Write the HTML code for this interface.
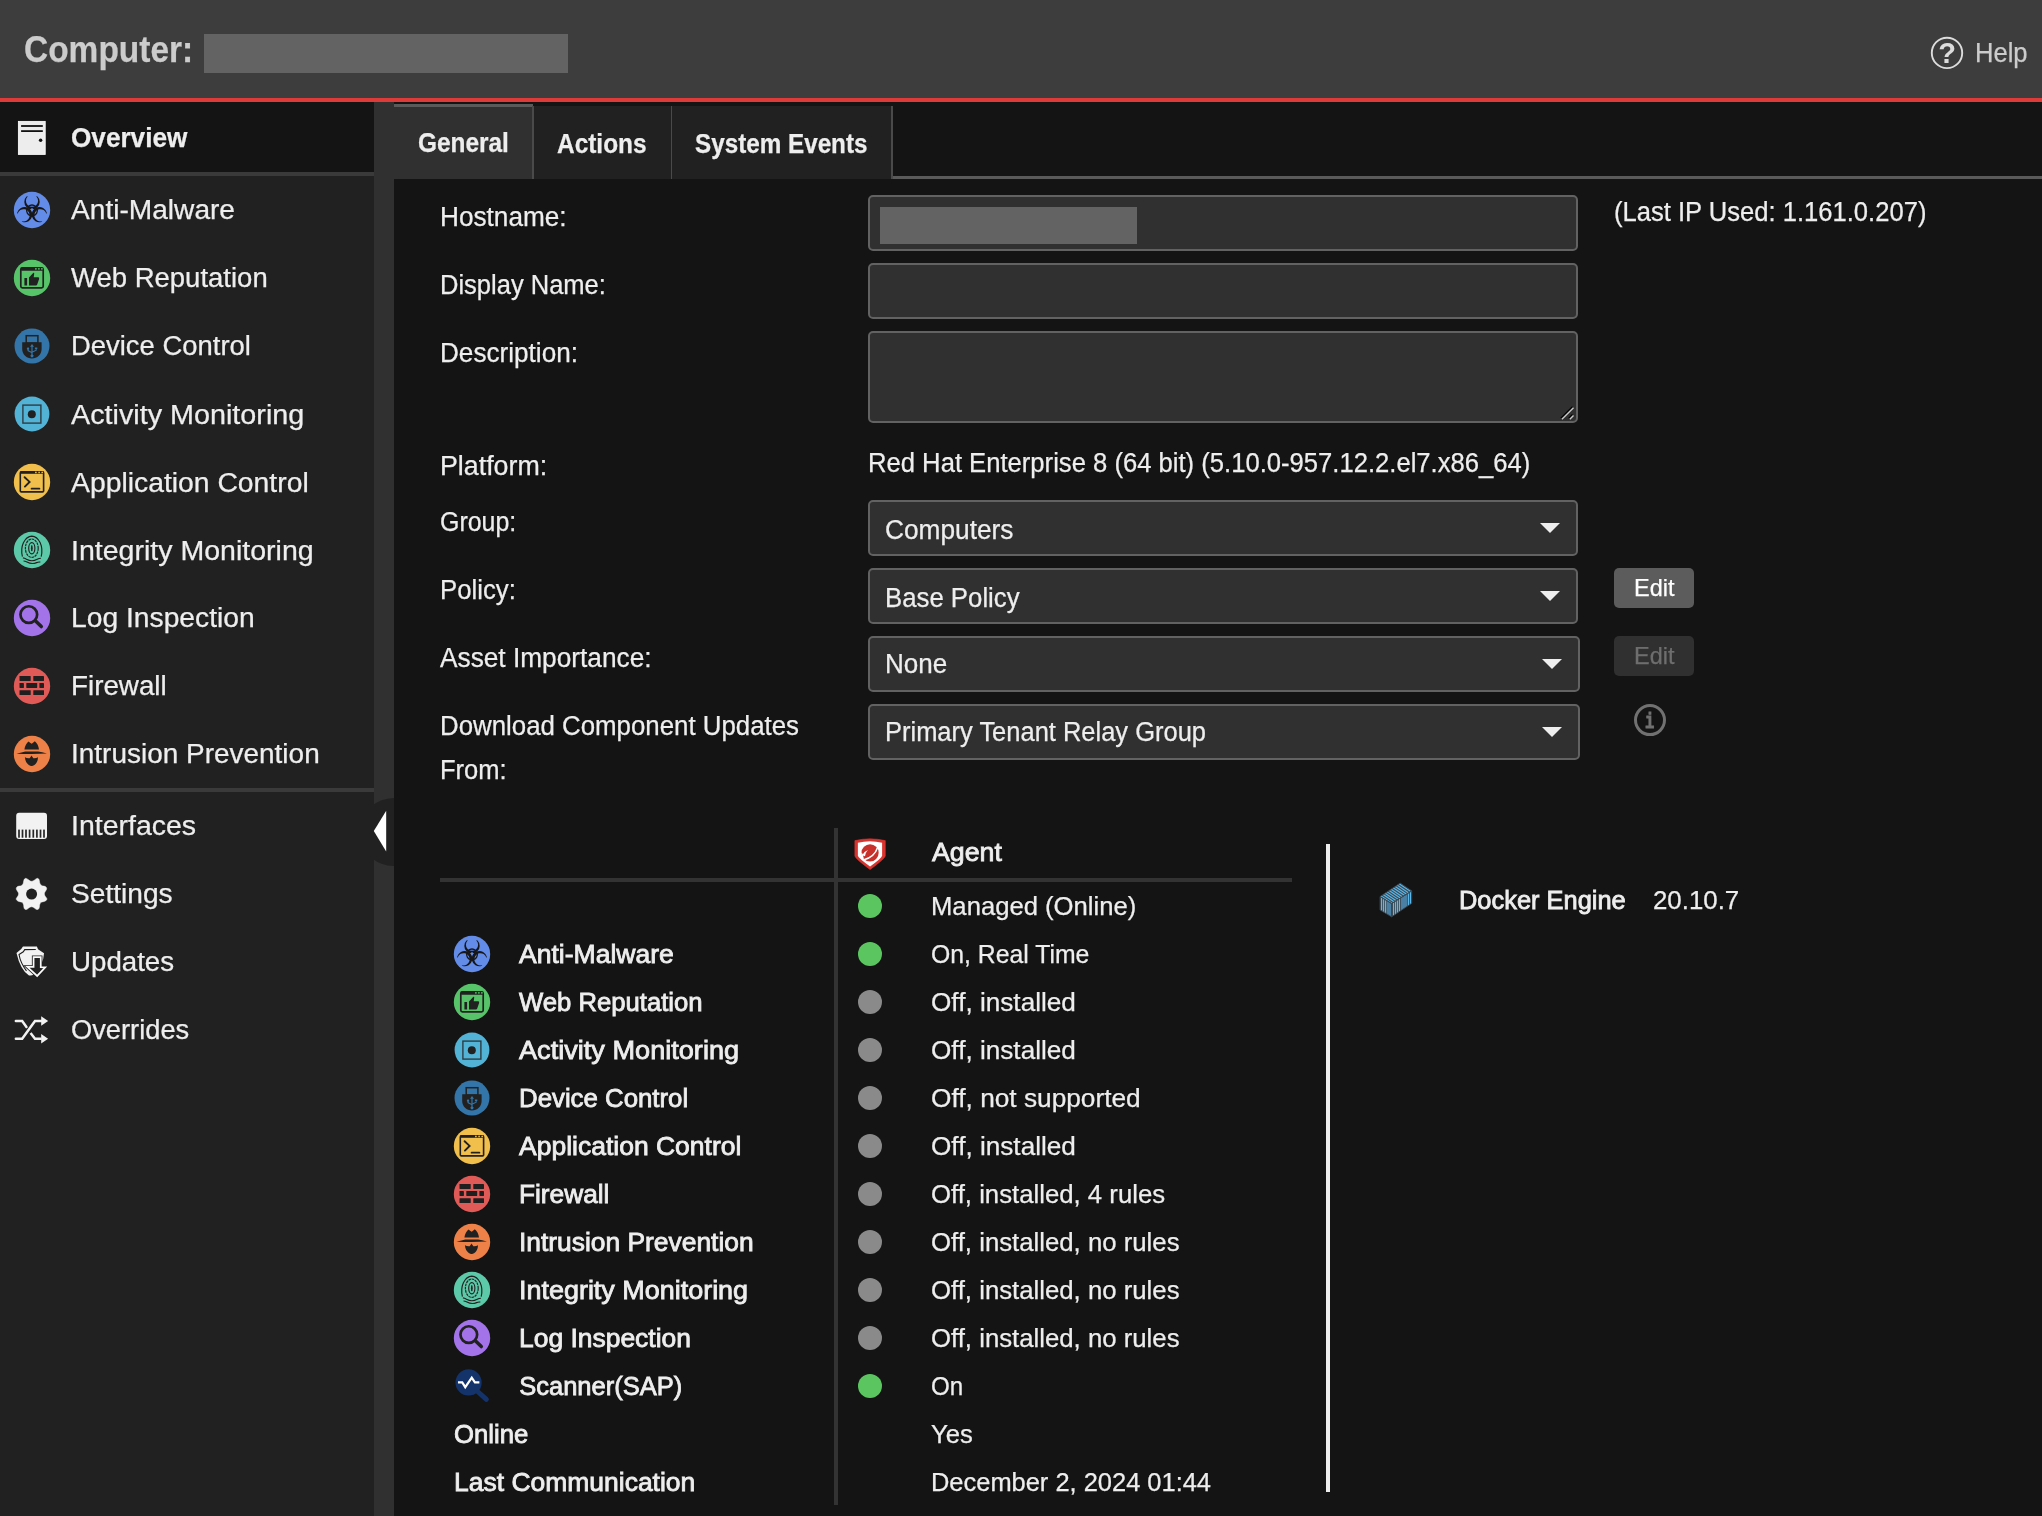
<!DOCTYPE html>
<html lang="en"><head><meta charset="utf-8"><title>Computer</title>
<style>
html,body{margin:0;padding:0;width:2042px;height:1516px;overflow:hidden;background:#141414;}
body{position:relative;font-family:"Liberation Sans",Arial,sans-serif;color:#eeeeee;}
.a{position:absolute;}
.t{position:absolute;white-space:pre;line-height:1;transform-origin:0 50%;-webkit-text-stroke:0.25px currentColor;}
#header{left:0;top:0;width:2042px;height:98px;background:#3d3d3d;}
#redline{left:0;top:98px;width:2042px;height:4px;background:#dd3a3a;}
#sidebar{left:0;top:102px;width:374px;height:1414px;background:#212121;}
#gap{left:374px;top:102px;width:20px;height:1414px;background:#303030;}
#ov{left:0;top:102px;width:374px;height:70px;background:#141414;}
.sep{left:0;width:374px;height:4px;background:#3a3a3a;}
.redact{background:#636363;}
.tab{top:106px;height:73px;background:#212121;}
.inp{box-sizing:border-box;background:#303030;border:2px solid #626262;border-radius:5px;}
.arr{width:0;height:0;border-left:10px solid transparent;border-right:10px solid transparent;border-top:10px solid #eeeeee;}
.btn{border-radius:5px;}
.dot{width:24px;height:24px;border-radius:50%;}
.g{background:#5bc65f;}
.o{background:#8a8a8a;}
.ic{width:36px;height:36px;}
#labels{position:absolute;left:0;top:0;width:2042px;height:1516px;will-change:transform;}
@media (max-width:1500px){html{zoom:.5}}

</style></head>
<body>
<div id="header" class="a"></div>
<div class="a redact" style="left:204px;top:34px;width:364px;height:39px"></div>
<div id="redline" class="a"></div>
<div id="sidebar" class="a"></div>
<div id="ov" class="a"></div>
<div class="a sep" style="top:172px"></div>
<div class="a sep" style="top:788px"></div>
<div id="gap" class="a"></div>
<!-- tabs -->
<div class="a" style="left:394px;top:176px;width:1648px;height:3px;background:#5a5a5a"></div>
<div class="a" style="left:394px;top:104px;width:139px;height:75px;background:#303030;border-top:3px solid #5a5a5a;box-sizing:border-box"></div>
<div class="a tab" style="left:533px;width:137px;border-left:2px solid #4a4a4a;border-right:2px solid #4a4a4a;box-sizing:content-box;left:532px"></div>
<div class="a tab" style="left:672px;width:219px;border-right:2px solid #4a4a4a"></div>
<div class="a" style="left:394px;top:179px;width:1648px;height:1337px;background:#141414"></div>
<!-- inputs -->
<div class="a inp" style="left:868px;top:195px;width:710px;height:56px"></div>
<div class="a redact" style="left:880px;top:207px;width:257px;height:37px"></div>
<div class="a inp" style="left:868px;top:263px;width:710px;height:56px"></div>
<div class="a inp" style="left:868px;top:331px;width:710px;height:92px"></div>
<div class="a inp" style="left:868px;top:500px;width:710px;height:56px"></div>
<div class="a inp" style="left:868px;top:568px;width:710px;height:56px"></div>
<div class="a inp" style="left:868px;top:636px;width:712px;height:56px"></div>
<div class="a inp" style="left:868px;top:704px;width:712px;height:56px"></div>
<div class="a arr" style="left:1540px;top:523px"></div>
<div class="a arr" style="left:1540px;top:591px"></div>
<div class="a arr" style="left:1542px;top:659px"></div>
<div class="a arr" style="left:1542px;top:727px"></div>
<div class="a btn" style="left:1614px;top:568px;width:80px;height:40px;background:#5c5c5c"></div>
<div class="a btn" style="left:1614px;top:636px;width:80px;height:40px;background:#303030"></div>
<!-- table lines -->
<div class="a" style="left:440px;top:878px;width:852px;height:4px;background:#333333"></div>
<div class="a" style="left:834px;top:828px;width:4px;height:677px;background:#333333"></div>
<div class="a" style="left:1326px;top:844px;width:4px;height:648px;background:#eeeeee"></div>
<svg class="a" style="left:0;top:0;will-change:transform" width="2042" height="1516" viewBox="0 0 2042 1516"><rect x="18.4" y="121.4" width="26.8" height="33" fill="#ededed" stroke="#fbfbfb" stroke-width="0.9"/><rect x="21.1" y="125.1" width="21.7" height="1.8" fill="#111"/><rect x="21.1" y="130.2" width="21.7" height="1.8" fill="#111"/><circle cx="40.6" cy="140.2" r="1.75" fill="#111"/><rect x="16.2" y="812.8" width="30.8" height="26.1" rx="3" fill="#f2f2f2"/><rect x="18.15" y="829.6" width="1.7" height="8.1" fill="#262626"/><rect x="21.65" y="829.6" width="1.7" height="8.1" fill="#262626"/><rect x="25.15" y="829.6" width="1.7" height="8.1" fill="#262626"/><rect x="28.75" y="829.6" width="1.7" height="8.1" fill="#262626"/><rect x="32.45" y="829.6" width="1.7" height="8.1" fill="#262626"/><rect x="36.05" y="829.6" width="1.7" height="8.1" fill="#262626"/><rect x="39.65" y="829.6" width="1.7" height="8.1" fill="#262626"/><rect x="43.15" y="829.6" width="1.7" height="8.1" fill="#262626"/><path d="M30.39,881.05 Q31.58,881.58 33.00,880.93 Q34.43,880.28 35.26,879.44 Q36.09,878.61 36.92,878.38 Q37.75,878.14 38.47,878.85 Q39.18,879.56 39.36,880.87 Q39.53,882.18 39.83,883.24 Q40.13,884.31 41.32,885.14 Q42.50,885.98 43.81,886.10 Q45.12,886.21 45.95,887.05 Q46.78,887.88 46.66,888.83 Q46.54,889.78 45.59,890.96 Q44.64,892.15 44.46,893.10 Q44.29,894.05 44.58,895.12 Q44.88,896.19 45.95,897.26 Q47.02,898.33 46.90,899.16 Q46.78,899.99 45.83,900.70 Q44.88,901.42 43.45,901.65 Q42.03,901.89 41.08,902.37 Q40.13,902.84 39.83,904.15 Q39.53,905.45 39.36,907.00 Q39.18,908.54 38.35,909.14 Q37.52,909.73 36.68,909.49 Q35.85,909.25 34.78,908.30 Q33.71,907.35 32.65,907.00 Q31.58,906.64 30.51,907.00 Q29.44,907.35 28.37,908.30 Q27.30,909.25 26.47,909.49 Q25.64,909.73 24.81,909.14 Q23.98,908.54 23.86,907.00 Q23.74,905.45 23.38,904.15 Q23.03,902.84 22.08,902.37 Q21.13,901.89 19.58,901.65 Q18.04,901.42 17.15,900.58 Q16.26,899.75 16.20,899.04 Q16.14,898.33 17.09,897.26 Q18.04,896.19 18.39,895.12 Q18.75,894.05 18.51,893.10 Q18.28,892.15 17.33,890.96 Q16.38,889.78 16.26,888.83 Q16.14,887.88 16.97,887.05 Q17.80,886.21 19.34,886.10 Q20.89,885.98 21.96,885.14 Q23.03,884.31 23.26,883.24 Q23.50,882.18 23.74,880.87 Q23.98,879.56 24.69,878.85 Q25.40,878.14 26.23,878.38 Q27.06,878.61 28.13,879.56 Q29.20,880.51 30.39,881.05 Z" fill="#f2f2f2" stroke="#f2f2f2" stroke-width="0.5"/><circle cx="31.6" cy="894.05" r="5.5" fill="#212121"/><path d="M22.97,946.60 L36.90,946.60 L38.01,949.13 L44.02,953.25 Q43.54,964.48 34.05,973.97 Q31.52,976.19 28.99,975.40 Q20.44,970.18 16.49,952.93 L21.23,948.97 Z" fill="#f2f2f2"/><path d="M35.79,949.54 L24.72,949.67 L23.29,951.82 L19.02,954.51 Q20.44,962.90 26.46,970.81" fill="none" stroke="#1a1a1a" stroke-width="1.1"/><path d="M33.58,957.14 L40.76,957.14 L40.76,967.17 L45.28,967.33 L37.15,975.94 L27.34,966.95 L33.58,966.95 Z" fill="#212121" stroke="#212121" stroke-width="3.4" stroke-linejoin="miter"/><path d="M33.58,957.14 L40.76,957.14 L40.76,967.17 L45.28,967.33 L37.15,975.94 L27.34,966.95 L33.58,966.95 Z" fill="#212121" stroke="#fafafa" stroke-width="1.7" stroke-linejoin="miter"/><path d="M15.85,1038.81 L22.18,1038.81 L35.00,1020.93 L41.65,1020.93" fill="none" stroke="#f2f2f2" stroke-width="2.5" stroke-linejoin="miter" stroke-linecap="round"/><path d="M15.85,1020.93 L22.18,1020.93 L26.46,1026.94" fill="none" stroke="#f2f2f2" stroke-width="2.5" stroke-linejoin="miter" stroke-linecap="round"/><path d="M30.57,1032.96 L35.00,1038.65 L41.65,1038.65" fill="none" stroke="#f2f2f2" stroke-width="2.5" stroke-linejoin="miter"/><path d="M41.17,1016.18 L48.13,1020.93 L41.17,1025.68 Z" fill="#f2f2f2"/><path d="M41.17,1033.91 L48.13,1038.65 L41.17,1043.56 Z" fill="#f2f2f2"/><clipPath id="gapclip"><rect x="374" y="102" width="20" height="1414"/></clipPath><circle cx="394" cy="832" r="34.1" fill="#212121" clip-path="url(#gapclip)"/><path d="M373.8,831.1 L386.2,810.7 L386.2,851.5 Z" fill="#ffffff"/><path d="M1560.9,418.3 L1572.5,406.7 M1568.8,418.3 L1572.5,414.6" stroke="#000" stroke-width="1.4"/><path d="M1561.9,419.3 L1573.5,407.7 M1569.8,419.3 L1573.5,415.6" stroke="#c8c8c8" stroke-width="1.4"/><circle cx="1947" cy="52.9" r="15.2" fill="none" stroke="#dcdcdc" stroke-width="1.9"/><text x="1947.2" y="63.4" text-anchor="middle" font-family="Liberation Sans, Arial, sans-serif" font-weight="700" font-size="29" fill="#dcdcdc">?</text><circle cx="1650" cy="720.1" r="14.5" fill="none" stroke="#717171" stroke-width="3"/><text transform="translate(1649.7,728.2) scale(0.74,1.06)" text-anchor="middle" font-family="Liberation Mono, monospace" font-weight="700" font-size="21" fill="#717171" stroke="#717171" stroke-width="0.9">i</text><path d="M854.87,840.61 Q870.07,837.12 885.27,840.61 L885.27,855.97 Q884.95,858.50 870.07,869.58 Q855.18,858.50 854.87,855.97 Z" fill="#d8342f" stroke="#d8342f" stroke-width="0.6" stroke-linejoin="round"/><path d="M857.87,842.82 Q870.07,839.66 882.10,842.82 L882.10,855.65 Q881.78,857.87 870.07,866.42 Q858.35,857.87 857.87,855.65 Z" fill="#ffffff"/><circle cx="870.07" cy="852.80" r="8.6" fill="#c8302b"/><path d="M864.05,859.77 Q874.50,856.92 877.35,848.05" fill="none" stroke="#ffffff" stroke-width="1.5"/><path d="M862.15,855.33 Q863.73,851.85 867.85,850.11 Q865.00,853.43 865.00,856.28 Z" fill="#ffffff"/><path d="M861.20,852.17 Q861.52,857.87 863.73,858.50 L862.78,854.07 Z" fill="#ffffff"/><path d="M476.50,1390.50 L486.38,1399.43" stroke="#14336a" stroke-width="4.9" stroke-linecap="round"/><circle cx="468.58" cy="1382.42" r="13.1" fill="#14336a"/><path d="M457.97,1382.42 L462.25,1382.42 L465.26,1387.17 L471.75,1377.67 L474.92,1382.42 L479.35,1382.42" fill="none" stroke="#ffffff" stroke-width="2.2" stroke-linejoin="miter"/><clipPath id="dtop"><polygon points="1380.07,896.58 1400.18,883.12 1411.74,890.88 1391.63,903.55"/></clipPath><clipPath id="dleft"><polygon points="1380.07,896.58 1391.63,903.55 1391.63,916.85 1380.07,909.88"/></clipPath><clipPath id="dright"><polygon points="1391.63,903.55 1411.74,890.88 1411.74,903.23 1391.63,916.85"/></clipPath><polygon points="1380.07,896.58 1400.18,883.12 1411.74,890.88 1391.63,903.55" fill="#3b4a55"/><polygon points="1380.07,896.58 1391.63,903.55 1391.63,916.85 1380.07,909.88" fill="#3b4a55"/><polygon points="1391.63,903.55 1411.74,890.88 1411.74,903.23 1391.63,916.85" fill="#3b4a55"/><g clip-path="url(#dtop)"><path d="M1381.08,895.91 L1392.64,903.67" stroke="#5cb8ea" stroke-width="1.15"/><path d="M1383.09,894.56 L1394.65,902.32" stroke="#5cb8ea" stroke-width="1.15"/><path d="M1385.10,893.22 L1396.66,900.98" stroke="#5cb8ea" stroke-width="1.15"/><path d="M1387.11,891.87 L1398.67,899.63" stroke="#5cb8ea" stroke-width="1.15"/><path d="M1389.12,890.53 L1400.68,898.28" stroke="#5cb8ea" stroke-width="1.15"/><path d="M1391.13,889.18 L1402.69,896.94" stroke="#5cb8ea" stroke-width="1.15"/><path d="M1393.14,887.84 L1404.70,895.59" stroke="#5cb8ea" stroke-width="1.15"/><path d="M1395.16,886.49 L1406.71,894.25" stroke="#5cb8ea" stroke-width="1.15"/><path d="M1397.17,885.14 L1408.72,892.90" stroke="#5cb8ea" stroke-width="1.15"/><path d="M1399.18,883.80 L1410.73,891.56" stroke="#5cb8ea" stroke-width="1.15"/></g><g clip-path="url(#dleft)"><polygon points="1386.63,900.54 1391.00,903.17 1391.00,916.47 1386.63,913.84" fill="#4a80a3"/><path d="M1381.50,895.00 L1381.50,917.17" stroke="#5cb8ea" stroke-width="1.15"/><path d="M1383.49,895.00 L1383.49,917.17" stroke="#5cb8ea" stroke-width="1.15"/><path d="M1385.49,895.00 L1385.49,917.17" stroke="#5cb8ea" stroke-width="1.15"/></g><g clip-path="url(#dright)"><polygon points="1400.97,897.66 1406.99,893.86 1406.99,906.43 1400.97,910.52" fill="#4a80a3"/><path d="M1393.53,888.67 L1393.53,917.17" stroke="#5cb8ea" stroke-width="1.15"/><path d="M1395.56,888.67 L1395.56,917.17" stroke="#5cb8ea" stroke-width="1.15"/><path d="M1397.52,888.67 L1397.52,917.17" stroke="#5cb8ea" stroke-width="1.15"/><path d="M1399.49,888.67 L1399.49,917.17" stroke="#5cb8ea" stroke-width="1.15"/><path d="M1408.42,888.67 L1408.42,917.17" stroke="#5cb8ea" stroke-width="1.15"/><path d="M1410.47,888.67 L1410.47,917.17" stroke="#5cb8ea" stroke-width="1.15"/></g><polygon points="1380.07,896.58 1400.18,883.12 1411.74,890.88 1391.63,903.55" fill="none" stroke="#3b4a55" stroke-width="0.9"/><polygon points="1380.07,896.58 1391.63,903.55 1391.63,916.85 1380.07,909.88" fill="none" stroke="#3b4a55" stroke-width="0.9"/><polygon points="1391.63,903.55 1411.74,890.88 1411.74,903.23 1391.63,916.85" fill="none" stroke="#3b4a55" stroke-width="0.9"/></svg>
<svg class="a" style="left:12.0px;top:190.0px" width="40" height="40" viewBox="-2 -2 40 40"><circle cx="18" cy="18" r="18.2" fill="#638ce8"/><path d="M12.46,4.55 A7.7,7.7 0 1 0 23.54,4.55 L22.11,4.14 A6.1,6.1 0 1 1 13.89,4.14 Z" transform="rotate(0 18 18.4)" fill="#17171a"/><path d="M12.46,4.55 A7.7,7.7 0 1 0 23.54,4.55 L22.11,4.14 A6.1,6.1 0 1 1 13.89,4.14 Z" transform="rotate(120 18 18.4)" fill="#17171a"/><path d="M12.46,4.55 A7.7,7.7 0 1 0 23.54,4.55 L22.11,4.14 A6.1,6.1 0 1 1 13.89,4.14 Z" transform="rotate(240 18 18.4)" fill="#17171a"/><path d="M14.45,14.46 A5.3,5.3 0 0 1 21.55,14.46" fill="none" stroke="#17171a" stroke-width="1.5"/><path d="M23.18,17.30 A5.3,5.3 0 0 1 19.64,23.44" fill="none" stroke="#17171a" stroke-width="1.5"/><path d="M16.36,23.44 A5.3,5.3 0 0 1 12.82,17.30" fill="none" stroke="#17171a" stroke-width="1.5"/><circle cx="18" cy="17.5" r="1.2" fill="#638ce8"/></svg>
<svg class="a" style="left:12.0px;top:258.0px" width="40" height="40" viewBox="-2 -2 40 40"><circle cx="18" cy="18" r="18.2" fill="#58c46a"/><rect x="6.8" y="7.9" width="22.4" height="19.9" rx="1.6" fill="none" stroke="#212121" stroke-width="1.7"/><rect x="6.8" y="7.4" width="22.4" height="3.3" rx="1" fill="#212121"/><circle cx="21.9" cy="8.8" r="0.9" fill="#58c46a"/><circle cx="24.9" cy="8.8" r="0.9" fill="#58c46a"/><circle cx="27.9" cy="8.8" r="0.9" fill="#58c46a"/><rect x="10.4" y="18" width="2.7" height="7.5" fill="#212121"/><path d="M15,25.5 L15,17.4 L19.4,12.7 Q20.4,12.6 20.2,13.8 L19.7,17.3 L24.3,17.3 Q25.5,17.6 25.1,19 L23.2,24.4 Q22.9,25.4 21.9,25.5 Z" fill="#212121"/></svg>
<svg class="a" style="left:11.9px;top:326.2px" width="40" height="40" viewBox="-2 -2 40 40"><circle cx="18" cy="18" r="17.5" fill="#3375a8"/><rect x="12.2" y="7.7" width="11.7" height="7.5" fill="none" stroke="#212121" stroke-width="1.5"/><path d="M8.2,14.3 L27.6,14.3 L27.6,20.9 C27.6,26.3 23.2,30.4 17.9,30.4 C12.6,30.4 8.2,26.3 8.2,20.9 Z" fill="#212121"/><path d="M18,16.1 L20,18.8 L18.6,18.8 L18.6,23.3 L21.6,21.9 L21.6,20.9 L20.9,20.9 L20.9,19.6 L23.3,19.6 L23.3,20.9 L22.7,20.9 L22.7,22.6 L18.6,24.6 L18.6,26.4 A1.5,1.5 0 1 1 17.4,26.4 L17.4,25 L13.5,23 L13.5,21.7 A1.2,1.2 0 1 1 14.6,21.7 L14.6,22.3 L17.4,23.7 L17.4,18.8 L16,18.8 Z" fill="#3375a8"/></svg>
<svg class="a" style="left:11.8px;top:393.7px" width="40" height="40" viewBox="-2 -2 40 40"><circle cx="18" cy="18" r="17.4" fill="#53b3d6"/><rect x="8.9" y="9.1" width="18" height="18" fill="none" stroke="#2d3b42" stroke-width="1.4"/><circle cx="17.8" cy="18.2" r="4" fill="#212121"/></svg>
<svg class="a" style="left:12.0px;top:462.0px" width="40" height="40" viewBox="-2 -2 40 40"><circle cx="18" cy="18" r="18.2" fill="#f0bf4c"/><rect x="6.3" y="7.9" width="23.3" height="20" rx="1" fill="none" stroke="#212121" stroke-width="1.6"/><rect x="6.3" y="7.2" width="23.3" height="2.6" fill="#212121"/><circle cx="21.9" cy="8.4" r="0.85" fill="#f0bf4c"/><circle cx="25.1" cy="8.4" r="0.85" fill="#f0bf4c"/><circle cx="28.2" cy="8.4" r="0.85" fill="#f0bf4c"/><path d="M10.6,13.2 L15.6,17.9 L10.9,22.6" fill="none" stroke="#212121" stroke-width="1.9" stroke-linecap="round"/><path d="M17.6,24.7 L25.4,24.7" fill="none" stroke="#212121" stroke-width="1.8" stroke-linecap="round"/></svg>
<svg class="a" style="left:12.0px;top:530.0px" width="40" height="40" viewBox="-2 -2 40 40"><circle cx="18" cy="18" r="18.2" fill="#5ccaa8"/><ellipse cx="17.8" cy="16.2" rx="0.9" ry="3.1" fill="#212121"/><ellipse cx="17.8" cy="16.2" rx="3.1" ry="5.6" fill="none" stroke="#212121" stroke-width="1.15"/><ellipse cx="17.8" cy="16.2" rx="6.4" ry="9.2" fill="none" stroke="#212121" stroke-width="1.15" stroke-dasharray="2.6 0.7"/><path d="M8.4,24.6 Q6.6,17 9.4,10.8 Q12.6,4.2 17.8,4.1 Q23,4.2 26.2,10.8 Q29,17 27.2,24.6" fill="none" stroke="#212121" stroke-width="1.15"/><path d="M8.9,25.9 Q10.5,26 12.5,27.2 Q17.8,30.2 23.2,27.3 Q25.2,26.2 26.9,26.2" fill="none" stroke="#212121" stroke-width="1.15"/><path d="M9.5,29.0 Q11,29.0 13,30.1 Q17.8,32.7 22.6,30.6 Q24.6,29.7 26.3,30.1" fill="none" stroke="#212121" stroke-width="1.15"/></svg>
<svg class="a" style="left:12.0px;top:598.0px" width="40" height="40" viewBox="-2 -2 40 40"><circle cx="18" cy="18" r="18.2" fill="#a373ea"/><circle cx="14.8" cy="14.6" r="8.35" fill="none" stroke="#212121" stroke-width="2.7"/><path d="M21.6,21.0 L27.3,26.6" stroke="#212121" stroke-width="3.5" stroke-linecap="round"/></svg>
<svg class="a" style="left:12.0px;top:666.0px" width="40" height="40" viewBox="-2 -2 40 40"><circle cx="18" cy="18" r="18.2" fill="#e05a57"/><rect x="5.5" y="8.1" width="11.20" height="4.90" rx="0.4" fill="#1f1f1f"/><rect x="19.3" y="8.1" width="10.70" height="4.90" rx="0.4" fill="#1f1f1f"/><rect x="5.5" y="22.2" width="11.20" height="4.90" rx="0.4" fill="#1f1f1f"/><rect x="19.3" y="22.2" width="10.70" height="4.90" rx="0.4" fill="#1f1f1f"/><rect x="5.5" y="15.0" width="4.40" height="4.95" rx="0.4" fill="#1f1f1f"/><rect x="12.3" y="15.0" width="10.90" height="4.95" rx="0.4" fill="#1f1f1f"/><rect x="25.4" y="15.0" width="4.60" height="4.95" rx="0.4" fill="#1f1f1f"/></svg>
<svg class="a" style="left:12.0px;top:734.0px" width="40" height="40" viewBox="-2 -2 40 40"><circle cx="18" cy="18" r="18.2" fill="#ee8147"/><path d="M10.4,13.6 Q10.9,10.5 11.9,8.8 Q13.2,6.3 14.6,5.4 Q16,6.6 17.7,7.7 Q19.4,6.6 20.8,5.2 Q22.4,6.3 23.5,8.6 Q24.5,10.6 25,13.6 Z" fill="#212121"/><path d="M2.5,17.7 Q8,16.3 11.2,15.5 L24.2,15.5 Q28,16.2 32.9,17.5 Q26,17.9 17.7,17.9 Q9,17.9 2.5,17.7 Z" fill="#212121"/><path d="M10.9,21.2 Q13,22.6 15.6,22.3 Q16.6,21.2 17.5,19.6 Q18.5,21.2 19.4,22.3 Q22,22.6 24,21.2 C23.9,25 22.4,27.7 20.4,29 Q18.6,30 17.7,29.9 Q16.4,30 14.8,28.9 C12.6,27.4 11.2,24.8 10.9,21.2 Z" fill="#212121"/></svg>
<svg class="a" style="left:452.0px;top:934.0px" width="40" height="40" viewBox="-2 -2 40 40"><circle cx="18" cy="18" r="18.2" fill="#638ce8"/><path d="M12.46,4.55 A7.7,7.7 0 1 0 23.54,4.55 L22.11,4.14 A6.1,6.1 0 1 1 13.89,4.14 Z" transform="rotate(0 18 18.4)" fill="#17171a"/><path d="M12.46,4.55 A7.7,7.7 0 1 0 23.54,4.55 L22.11,4.14 A6.1,6.1 0 1 1 13.89,4.14 Z" transform="rotate(120 18 18.4)" fill="#17171a"/><path d="M12.46,4.55 A7.7,7.7 0 1 0 23.54,4.55 L22.11,4.14 A6.1,6.1 0 1 1 13.89,4.14 Z" transform="rotate(240 18 18.4)" fill="#17171a"/><path d="M14.45,14.46 A5.3,5.3 0 0 1 21.55,14.46" fill="none" stroke="#17171a" stroke-width="1.5"/><path d="M23.18,17.30 A5.3,5.3 0 0 1 19.64,23.44" fill="none" stroke="#17171a" stroke-width="1.5"/><path d="M16.36,23.44 A5.3,5.3 0 0 1 12.82,17.30" fill="none" stroke="#17171a" stroke-width="1.5"/><circle cx="18" cy="17.5" r="1.2" fill="#638ce8"/></svg>
<svg class="a" style="left:452.0px;top:982.0px" width="40" height="40" viewBox="-2 -2 40 40"><circle cx="18" cy="18" r="18.2" fill="#58c46a"/><rect x="6.8" y="7.9" width="22.4" height="19.9" rx="1.6" fill="none" stroke="#212121" stroke-width="1.7"/><rect x="6.8" y="7.4" width="22.4" height="3.3" rx="1" fill="#212121"/><circle cx="21.9" cy="8.8" r="0.9" fill="#58c46a"/><circle cx="24.9" cy="8.8" r="0.9" fill="#58c46a"/><circle cx="27.9" cy="8.8" r="0.9" fill="#58c46a"/><rect x="10.4" y="18" width="2.7" height="7.5" fill="#212121"/><path d="M15,25.5 L15,17.4 L19.4,12.7 Q20.4,12.6 20.2,13.8 L19.7,17.3 L24.3,17.3 Q25.5,17.6 25.1,19 L23.2,24.4 Q22.9,25.4 21.9,25.5 Z" fill="#212121"/></svg>
<svg class="a" style="left:452.0px;top:1030.0px" width="40" height="40" viewBox="-2 -2 40 40"><circle cx="18" cy="18" r="17.4" fill="#53b3d6"/><rect x="8.9" y="9.1" width="18" height="18" fill="none" stroke="#2d3b42" stroke-width="1.4"/><circle cx="17.8" cy="18.2" r="4" fill="#212121"/></svg>
<svg class="a" style="left:452.0px;top:1078.0px" width="40" height="40" viewBox="-2 -2 40 40"><circle cx="18" cy="18" r="17.5" fill="#3375a8"/><rect x="12.2" y="7.7" width="11.7" height="7.5" fill="none" stroke="#212121" stroke-width="1.5"/><path d="M8.2,14.3 L27.6,14.3 L27.6,20.9 C27.6,26.3 23.2,30.4 17.9,30.4 C12.6,30.4 8.2,26.3 8.2,20.9 Z" fill="#212121"/><path d="M18,16.1 L20,18.8 L18.6,18.8 L18.6,23.3 L21.6,21.9 L21.6,20.9 L20.9,20.9 L20.9,19.6 L23.3,19.6 L23.3,20.9 L22.7,20.9 L22.7,22.6 L18.6,24.6 L18.6,26.4 A1.5,1.5 0 1 1 17.4,26.4 L17.4,25 L13.5,23 L13.5,21.7 A1.2,1.2 0 1 1 14.6,21.7 L14.6,22.3 L17.4,23.7 L17.4,18.8 L16,18.8 Z" fill="#3375a8"/></svg>
<svg class="a" style="left:452.0px;top:1126.0px" width="40" height="40" viewBox="-2 -2 40 40"><circle cx="18" cy="18" r="18.2" fill="#f0bf4c"/><rect x="6.3" y="7.9" width="23.3" height="20" rx="1" fill="none" stroke="#212121" stroke-width="1.6"/><rect x="6.3" y="7.2" width="23.3" height="2.6" fill="#212121"/><circle cx="21.9" cy="8.4" r="0.85" fill="#f0bf4c"/><circle cx="25.1" cy="8.4" r="0.85" fill="#f0bf4c"/><circle cx="28.2" cy="8.4" r="0.85" fill="#f0bf4c"/><path d="M10.6,13.2 L15.6,17.9 L10.9,22.6" fill="none" stroke="#212121" stroke-width="1.9" stroke-linecap="round"/><path d="M17.6,24.7 L25.4,24.7" fill="none" stroke="#212121" stroke-width="1.8" stroke-linecap="round"/></svg>
<svg class="a" style="left:452.0px;top:1174.0px" width="40" height="40" viewBox="-2 -2 40 40"><circle cx="18" cy="18" r="18.2" fill="#e05a57"/><rect x="5.5" y="8.1" width="11.20" height="4.90" rx="0.4" fill="#1f1f1f"/><rect x="19.3" y="8.1" width="10.70" height="4.90" rx="0.4" fill="#1f1f1f"/><rect x="5.5" y="22.2" width="11.20" height="4.90" rx="0.4" fill="#1f1f1f"/><rect x="19.3" y="22.2" width="10.70" height="4.90" rx="0.4" fill="#1f1f1f"/><rect x="5.5" y="15.0" width="4.40" height="4.95" rx="0.4" fill="#1f1f1f"/><rect x="12.3" y="15.0" width="10.90" height="4.95" rx="0.4" fill="#1f1f1f"/><rect x="25.4" y="15.0" width="4.60" height="4.95" rx="0.4" fill="#1f1f1f"/></svg>
<svg class="a" style="left:452.0px;top:1222.0px" width="40" height="40" viewBox="-2 -2 40 40"><circle cx="18" cy="18" r="18.2" fill="#ee8147"/><path d="M10.4,13.6 Q10.9,10.5 11.9,8.8 Q13.2,6.3 14.6,5.4 Q16,6.6 17.7,7.7 Q19.4,6.6 20.8,5.2 Q22.4,6.3 23.5,8.6 Q24.5,10.6 25,13.6 Z" fill="#212121"/><path d="M2.5,17.7 Q8,16.3 11.2,15.5 L24.2,15.5 Q28,16.2 32.9,17.5 Q26,17.9 17.7,17.9 Q9,17.9 2.5,17.7 Z" fill="#212121"/><path d="M10.9,21.2 Q13,22.6 15.6,22.3 Q16.6,21.2 17.5,19.6 Q18.5,21.2 19.4,22.3 Q22,22.6 24,21.2 C23.9,25 22.4,27.7 20.4,29 Q18.6,30 17.7,29.9 Q16.4,30 14.8,28.9 C12.6,27.4 11.2,24.8 10.9,21.2 Z" fill="#212121"/></svg>
<svg class="a" style="left:452.0px;top:1270.0px" width="40" height="40" viewBox="-2 -2 40 40"><circle cx="18" cy="18" r="18.2" fill="#5ccaa8"/><ellipse cx="17.8" cy="16.2" rx="0.9" ry="3.1" fill="#212121"/><ellipse cx="17.8" cy="16.2" rx="3.1" ry="5.6" fill="none" stroke="#212121" stroke-width="1.15"/><ellipse cx="17.8" cy="16.2" rx="6.4" ry="9.2" fill="none" stroke="#212121" stroke-width="1.15" stroke-dasharray="2.6 0.7"/><path d="M8.4,24.6 Q6.6,17 9.4,10.8 Q12.6,4.2 17.8,4.1 Q23,4.2 26.2,10.8 Q29,17 27.2,24.6" fill="none" stroke="#212121" stroke-width="1.15"/><path d="M8.9,25.9 Q10.5,26 12.5,27.2 Q17.8,30.2 23.2,27.3 Q25.2,26.2 26.9,26.2" fill="none" stroke="#212121" stroke-width="1.15"/><path d="M9.5,29.0 Q11,29.0 13,30.1 Q17.8,32.7 22.6,30.6 Q24.6,29.7 26.3,30.1" fill="none" stroke="#212121" stroke-width="1.15"/></svg>
<svg class="a" style="left:452.0px;top:1318.0px" width="40" height="40" viewBox="-2 -2 40 40"><circle cx="18" cy="18" r="18.2" fill="#a373ea"/><circle cx="14.8" cy="14.6" r="8.35" fill="none" stroke="#212121" stroke-width="2.7"/><path d="M21.6,21.0 L27.3,26.6" stroke="#212121" stroke-width="3.5" stroke-linecap="round"/></svg>
<div class="a dot g" style="left:858.0px;top:893.9px"></div>
<div class="a dot g" style="left:858.0px;top:941.9px"></div>
<div class="a dot o" style="left:858.0px;top:989.9px"></div>
<div class="a dot o" style="left:858.0px;top:1037.9px"></div>
<div class="a dot o" style="left:858.0px;top:1085.9px"></div>
<div class="a dot o" style="left:858.0px;top:1133.9px"></div>
<div class="a dot o" style="left:858.0px;top:1181.9px"></div>
<div class="a dot o" style="left:858.0px;top:1229.9px"></div>
<div class="a dot o" style="left:858.0px;top:1277.9px"></div>
<div class="a dot o" style="left:858.0px;top:1325.9px"></div>
<div class="a dot g" style="left:858.0px;top:1373.9px"></div>
<div id="labels">
<span class="t" style="left:24.0px;top:32.4px;font-size:36.5px;font-weight:700;color:#cccccc;transform:scaleX(0.9170);">Computer:</span>
<span class="t" style="left:1975.0px;top:40.1px;font-size:27px;color:#cccccc;transform:scaleX(0.9472);">Help</span>
<span class="t" style="left:70.5px;top:124.7px;font-size:27.0px;font-weight:700;transform:scaleX(0.9685);">Overview</span>
<span class="t" style="left:70.5px;top:197.1px;font-size:27.0px;transform:scaleX(1.0410);">Anti-Malware</span>
<span class="t" style="left:70.5px;top:265.1px;font-size:27.0px;transform:scaleX(1.0184);">Web Reputation</span>
<span class="t" style="left:70.5px;top:333.3px;font-size:27.0px;transform:scaleX(1.0159);">Device Control</span>
<span class="t" style="left:70.5px;top:401.7px;font-size:27.0px;transform:scaleX(1.0649);">Activity Monitoring</span>
<span class="t" style="left:70.5px;top:469.5px;font-size:27.0px;transform:scaleX(1.0488);">Application Control</span>
<span class="t" style="left:70.5px;top:537.6px;font-size:27.0px;transform:scaleX(1.0570);">Integrity Monitoring</span>
<span class="t" style="left:70.5px;top:605.4px;font-size:27.0px;transform:scaleX(1.0459);">Log Inspection</span>
<span class="t" style="left:70.5px;top:673.1px;font-size:27.0px;transform:scaleX(1.0289);">Firewall</span>
<span class="t" style="left:70.5px;top:741.1px;font-size:27.0px;transform:scaleX(1.0356);">Intrusion Prevention</span>
<span class="t" style="left:70.5px;top:812.8px;font-size:27.0px;transform:scaleX(1.0551);">Interfaces</span>
<span class="t" style="left:70.5px;top:880.6px;font-size:27.0px;transform:scaleX(1.0424);">Settings</span>
<span class="t" style="left:70.5px;top:948.6px;font-size:27.0px;transform:scaleX(1.0251);">Updates</span>
<span class="t" style="left:70.5px;top:1016.7px;font-size:27.0px;transform:scaleX(1.0100);">Overrides</span>
<span class="t" style="left:417.6px;top:130.1px;font-size:27.0px;font-weight:700;transform:scaleX(0.9029);">General</span>
<span class="t" style="left:556.8px;top:131.3px;font-size:27.0px;font-weight:700;transform:scaleX(0.9049);">Actions</span>
<span class="t" style="left:695.0px;top:131.3px;font-size:27.0px;font-weight:700;transform:scaleX(0.8979);">System Events</span>
<span class="t" style="left:439.6px;top:204.1px;font-size:27.0px;transform:scaleX(0.9697);">Hostname:</span>
<span class="t" style="left:439.6px;top:271.9px;font-size:27.0px;transform:scaleX(0.9450);">Display Name:</span>
<span class="t" style="left:439.6px;top:339.8px;font-size:27.0px;transform:scaleX(0.9680);">Description:</span>
<span class="t" style="left:439.6px;top:453.2px;font-size:27.0px;transform:scaleX(0.9923);">Platform:</span>
<span class="t" style="left:439.6px;top:509.1px;font-size:27.0px;transform:scaleX(0.9243);">Group:</span>
<span class="t" style="left:439.6px;top:577.3px;font-size:27.0px;transform:scaleX(0.9531);">Policy:</span>
<span class="t" style="left:439.6px;top:644.9px;font-size:27.0px;transform:scaleX(0.9724);">Asset Importance:</span>
<span class="t" style="left:439.6px;top:713.4px;font-size:27.0px;transform:scaleX(0.9567);">Download Component Updates</span>
<span class="t" style="left:439.6px;top:756.5px;font-size:27.0px;transform:scaleX(0.9447);">From:</span>
<span class="t" style="left:867.6px;top:449.5px;font-size:27.0px;transform:scaleX(0.9490);">Red Hat Enterprise 8 (64 bit) (5.10.0-957.12.2.el7.x86_64)</span>
<span class="t" style="left:1613.8px;top:199.1px;font-size:27.0px;transform:scaleX(0.9475);">(Last IP Used: 1.161.0.207)</span>
<span class="t" style="left:885.0px;top:517.0px;font-size:27.0px;transform:scaleX(0.9724);">Computers</span>
<span class="t" style="left:885.0px;top:585.1px;font-size:27.0px;transform:scaleX(0.9541);">Base Policy</span>
<span class="t" style="left:885.0px;top:650.9px;font-size:27.0px;transform:scaleX(0.9636);">None</span>
<span class="t" style="left:885.0px;top:719.1px;font-size:27.0px;transform:scaleX(0.9437);">Primary Tenant Relay Group</span>
<span class="t" style="left:1633.6px;top:576.0px;font-size:24.5px;color:#ffffff;transform:scaleX(0.9593);">Edit</span>
<span class="t" style="left:1633.6px;top:643.9px;font-size:24.5px;color:#6e6e6e;transform:scaleX(0.9593);">Edit</span>
<span class="t" style="left:931.9px;top:840.2px;font-size:25.5px;-webkit-text-stroke:0.8px currentColor;transform:scaleX(1.0489);">Agent</span>
<span class="t" style="left:931.3px;top:894.3px;font-size:25.5px;transform:scaleX(1.0058);">Managed (Online)</span>
<span class="t" style="left:931.3px;top:942.3px;font-size:25.5px;transform:scaleX(0.9719);">On, Real Time</span>
<span class="t" style="left:931.3px;top:990.3px;font-size:25.5px;transform:scaleX(1.0256);">Off, installed</span>
<span class="t" style="left:931.3px;top:1038.3px;font-size:25.5px;transform:scaleX(1.0256);">Off, installed</span>
<span class="t" style="left:931.3px;top:1086.3px;font-size:25.5px;transform:scaleX(1.0296);">Off, not supported</span>
<span class="t" style="left:931.3px;top:1134.3px;font-size:25.5px;transform:scaleX(1.0256);">Off, installed</span>
<span class="t" style="left:931.3px;top:1182.3px;font-size:25.5px;transform:scaleX(1.0091);">Off, installed, 4 rules</span>
<span class="t" style="left:931.3px;top:1230.3px;font-size:25.5px;transform:scaleX(1.0095);">Off, installed, no rules</span>
<span class="t" style="left:931.3px;top:1278.3px;font-size:25.5px;transform:scaleX(1.0095);">Off, installed, no rules</span>
<span class="t" style="left:931.3px;top:1326.3px;font-size:25.5px;transform:scaleX(1.0095);">Off, installed, no rules</span>
<span class="t" style="left:931.3px;top:1374.3px;font-size:25.5px;transform:scaleX(0.9462);">On</span>
<span class="t" style="left:931.3px;top:1422.3px;font-size:25.5px;transform:scaleX(1.0022);">Yes</span>
<span class="t" style="left:931.3px;top:1470.3px;font-size:25.5px;transform:scaleX(0.9976);">December 2, 2024 01:44</span>
<span class="t" style="left:519.2px;top:942.3px;font-size:25.5px;-webkit-text-stroke:0.8px currentColor;transform:scaleX(1.0403);">Anti-Malware</span>
<span class="t" style="left:519.2px;top:990.3px;font-size:25.5px;-webkit-text-stroke:0.8px currentColor;transform:scaleX(1.0065);">Web Reputation</span>
<span class="t" style="left:519.2px;top:1038.3px;font-size:25.5px;-webkit-text-stroke:0.8px currentColor;transform:scaleX(1.0638);">Activity Monitoring</span>
<span class="t" style="left:519.2px;top:1086.3px;font-size:25.5px;-webkit-text-stroke:0.8px currentColor;transform:scaleX(1.0118);">Device Control</span>
<span class="t" style="left:519.2px;top:1134.3px;font-size:25.5px;-webkit-text-stroke:0.8px currentColor;transform:scaleX(1.0390);">Application Control</span>
<span class="t" style="left:519.2px;top:1182.3px;font-size:25.5px;-webkit-text-stroke:0.8px currentColor;transform:scaleX(1.0291);">Firewall</span>
<span class="t" style="left:519.2px;top:1230.3px;font-size:25.5px;-webkit-text-stroke:0.8px currentColor;transform:scaleX(1.0343);">Intrusion Prevention</span>
<span class="t" style="left:519.2px;top:1278.3px;font-size:25.5px;-webkit-text-stroke:0.8px currentColor;transform:scaleX(1.0564);">Integrity Monitoring</span>
<span class="t" style="left:519.2px;top:1326.3px;font-size:25.5px;-webkit-text-stroke:0.8px currentColor;transform:scaleX(1.0363);">Log Inspection</span>
<span class="t" style="left:519.2px;top:1374.3px;font-size:25.5px;-webkit-text-stroke:0.8px currentColor;">Scanner(SAP)</span>
<span class="t" style="left:454.3px;top:1422.4px;font-size:25.5px;-webkit-text-stroke:0.8px currentColor;transform:scaleX(1.0065);">Online</span>
<span class="t" style="left:454.3px;top:1470.1px;font-size:25.5px;-webkit-text-stroke:0.8px currentColor;transform:scaleX(1.0381);">Last Communication</span>
<span class="t" style="left:1458.8px;top:888.0px;font-size:25.5px;-webkit-text-stroke:0.8px currentColor;transform:scaleX(0.9966);">Docker Engine</span>
<span class="t" style="left:1653.0px;top:888.0px;font-size:25.5px;transform:scaleX(1.0130);">20.10.7</span>
</div>
</body></html>
